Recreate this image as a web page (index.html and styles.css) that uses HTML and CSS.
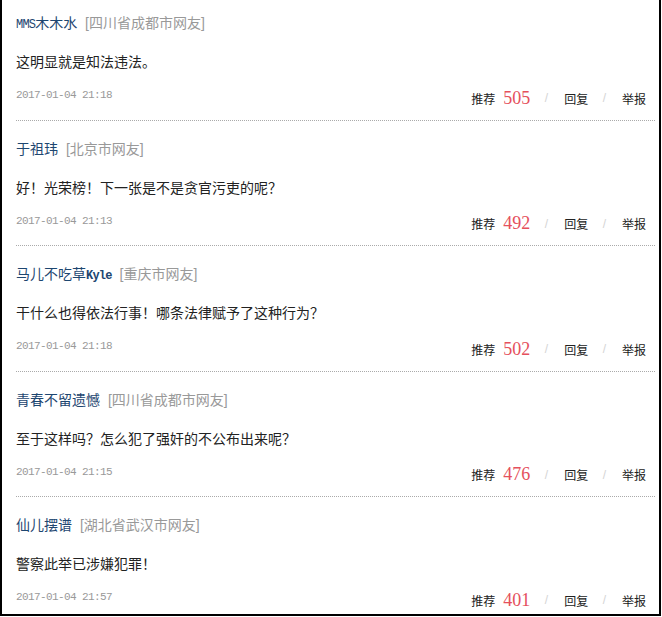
FILE: index.html
```html
<!DOCTYPE html>
<html lang="zh-CN">
<head>
    <meta charset="UTF-8">
    <title>网友评论</title>
    <link rel="stylesheet" href="styles.css">
</head>
<body>
    <div class="comment-box">
        <div class="comment">
            <div class="comment-head">
                <span class="user"><span class="latin">MMS</span>木木水</span>
                <span class="from">[四川省成都市网友]</span>
            </div>
            <p class="comment-text">这明显就是知法违法。</p>
            <div class="comment-foot">
                <span class="time">2017-01-04 21:18</span>
                <div class="actions">
                    <a href="#">推荐</a><span class="votes">505</span>
                    <span class="sep">/</span><a href="#">回复</a>
                    <span class="sep">/</span><a href="#">举报</a>
                </div>
            </div>
        </div>

        <div class="comment">
            <div class="comment-head">
                <span class="user">于祖玮</span>
                <span class="from">[北京市网友]</span>
            </div>
            <p class="comment-text">好！光荣榜！下一张是不是贪官污吏的呢？</p>
            <div class="comment-foot">
                <span class="time">2017-01-04 21:13</span>
                <div class="actions">
                    <a href="#">推荐</a><span class="votes">492</span>
                    <span class="sep">/</span><a href="#">回复</a>
                    <span class="sep">/</span><a href="#">举报</a>
                </div>
            </div>
        </div>

        <div class="comment">
            <div class="comment-head">
                <span class="user">马儿不吃草<span class="latin bold">Kyle</span></span>
                <span class="from">[重庆市网友]</span>
            </div>
            <p class="comment-text">干什么也得依法行事！哪条法律赋予了这种行为？</p>
            <div class="comment-foot">
                <span class="time">2017-01-04 21:18</span>
                <div class="actions">
                    <a href="#">推荐</a><span class="votes">502</span>
                    <span class="sep">/</span><a href="#">回复</a>
                    <span class="sep">/</span><a href="#">举报</a>
                </div>
            </div>
        </div>

        <div class="comment">
            <div class="comment-head">
                <span class="user">青春不留遗憾</span>
                <span class="from">[四川省成都市网友]</span>
            </div>
            <p class="comment-text">至于这样吗？怎么犯了强奸的不公布出来呢？</p>
            <div class="comment-foot">
                <span class="time">2017-01-04 21:15</span>
                <div class="actions">
                    <a href="#">推荐</a><span class="votes">476</span>
                    <span class="sep">/</span><a href="#">回复</a>
                    <span class="sep">/</span><a href="#">举报</a>
                </div>
            </div>
        </div>

        <div class="comment">
            <div class="comment-head">
                <span class="user">仙儿摆谱</span>
                <span class="from">[湖北省武汉市网友]</span>
            </div>
            <p class="comment-text">警察此举已涉嫌犯罪！</p>
            <div class="comment-foot">
                <span class="time">2017-01-04 21:57</span>
                <div class="actions">
                    <a href="#">推荐</a><span class="votes">401</span>
                    <span class="sep">/</span><a href="#">回复</a>
                    <span class="sep">/</span><a href="#">举报</a>
                </div>
            </div>
        </div>
    </div>
</body>
</html>
```

FILE: styles.css
```css
body {
    margin: 0;
    background: #fff;
    font-family: 'Liberation Sans', 'Noto Sans CJK SC', sans-serif;
    color: #222;
}

.comment-box {
    box-sizing: border-box;
    width: 661px;
    height: 616px;
    border: 2px solid #000;
    border-top: none;
    overflow: hidden;
    background: #fff;
}

.comment {
    margin: 0 4px 0 14px;
    padding: 18px 0 8.5px;
    border-bottom: 1px dotted #aaa;
}

.comment:first-child {
    padding-top: 13px;
}

.comment-head {
    height: 20px;
    line-height: 20px;
    font-size: 14px;
    white-space: nowrap;
}

.user {
    color: #1d4670;
}

.latin {
    font-family: 'Liberation Mono', monospace;
    font-size: 12px;
    letter-spacing: -0.8px;
}

.bold {
    font-weight: bold;
}

.from {
    color: #999;
    margin-left: 4px;
}

.comment-text {
    margin: 18px 0 0;
    line-height: 22px;
    font-size: 14px;
    color: #222;
}

.comment-foot {
    display: flex;
    justify-content: space-between;
    align-items: flex-start;
    margin-top: 12px;
    height: 26px;
}

.time {
    font-family: 'Liberation Mono', monospace;
    font-size: 11px;
    letter-spacing: -0.6px;
    line-height: 20px;
    color: #999;
}

.actions {
    display: flex;
    align-items: center;
    height: 26px;
    padding-right: 9px;
    font-size: 12px;
}

.actions a {
    color: #222;
    text-decoration: none;
}

.votes {
    margin-left: 8px;
    font-family: 'Liberation Serif', serif;
    font-size: 18px;
    color: #e5505c;
}

.sep {
    margin: 0 16px 0 14.5px;
    color: #d4d4d4;
    font-size: 12px;
}
```
